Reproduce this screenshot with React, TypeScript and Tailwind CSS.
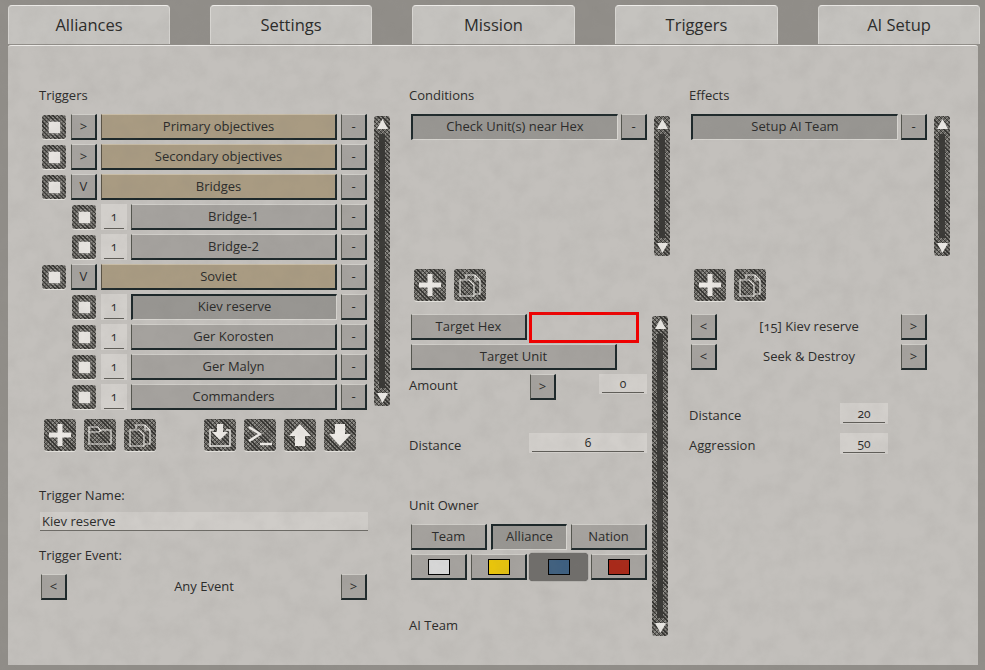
const ink = 'text-[#2b2b2a]'
const mesh =
  'bg-[#63615d] bg-[repeating-linear-gradient(45deg,#363532_0_1px,transparent_1px_3px),repeating-linear-gradient(-45deg,#8f8d88_0_1px,transparent_1px_3px)]'

type Tone = 'grey' | 'tan' | 'pressed'

function Btn({
  children,
  tone = 'grey',
  className = '',
}: {
  children?: React.ReactNode
  tone?: Tone
  className?: string
}) {
  const tones = {
    grey: 'bg-[#a5a29e] border-t-[#d0cec9] border-l-[#55564f] border-r-[#1d282a] border-b-[#1d282a] border-t border-l border-r-2 border-b-2',
    tan: 'bg-[#a99b82] border-t-[#c9bda6] border-l-[#5a5345] border-r-[#1d282a] border-b-[#1d282a] border-t border-l border-r-2 border-b-2',
    pressed:
      'bg-[#989692] pb-px border-t-[#1d282a] border-l-[#1d282a] border-r-[#d8d6d1] border-b-[#d8d6d1] border-t-2 border-l-2 border-r border-b',
  }
  return (
    <div className={`flex h-[26px] shrink-0 items-center justify-center text-[13px] ${ink} ${tones[tone]} ${className}`}>
      {children}
    </div>
  )
}

function Check() {
  return (
    <div className={`flex size-6 shrink-0 items-center justify-center rounded-[3px] ${mesh} shadow-[0_1px_0_#e4e2dd]`}>
      <div className="size-[11px] bg-[#e6e3df] shadow-[0_0_3px_#d8d6d1]" />
    </div>
  )
}

function Small({ children }: { children: React.ReactNode }) {
  return <Btn className="w-[26px] text-[12px]">{children}</Btn>
}

function Num({ children, className = 'w-[48px] h-[20px]' }: { children: React.ReactNode; className?: string }) {
  return (
    <div
      className={`flex shrink-0 items-center justify-center bg-[#d2cfcb] bg-[linear-gradient(#5f5d58,#5f5d58)] bg-[length:calc(100%-6px)_1px] bg-[position:center_bottom_1px] bg-no-repeat text-[12px] oldstyle-nums ${ink} ${className}`}
    >
      {children}
    </div>
  )
}

function Label({ children, className = '' }: { children: React.ReactNode; className?: string }) {
  return <div className={`h-[18px] text-[13px] leading-[18px] ${ink} ${className}`}>{children}</div>
}

function Arrow({ down = false }: { down?: boolean }) {
  return (
    <svg viewBox="0 0 10 10" className="h-[11px] w-[11px]">
      <path d={down ? 'M0 1h10L5 10z' : 'M0 9h10L5 0z'} fill="#e8e6e2" />
    </svg>
  )
}

function Scrollbar({ className }: { className: string }) {
  return (
    <div className={`flex w-4 shrink-0 flex-col items-center justify-between rounded-[3px] py-[3px] ${mesh} ${className}`}>
      <Arrow />
      <div className="my-1 w-[6px] flex-1 bg-[#3a3936]" />
      <Arrow down />
    </div>
  )
}

function IconBtn({ children }: { children: React.ReactNode }) {
  return (
    <div className={`flex h-[32px] w-[32px] shrink-0 items-center justify-center rounded-[3px] ${mesh} shadow-[0_1px_0_#e4e2dd]`}>
      <svg viewBox="0 0 32 32" className="size-8" fill="none" stroke="#ece9e5" strokeWidth="1.2">
        {children}
      </svg>
    </div>
  )
}

const PlusIcon = () => <path d="M13.500 5h5v8.500H27v5h-8.500V27h-5v-8.500H5v-5h8.500z" fill="#ece9e5" stroke="none" />
const FolderIcon = () => <path d="M5 25V8h9l2 3h11v14z M5 13h10l2-2" />
const CopyIcon = () => (
  <>
    <path d="M12 10V6h9l5 5v14h-5" />
    <path d="M21 6v5h5" />
    <path d="M6 11h9l5 5v11H6z" />
  </>
)
const ImportIcon = () => (
  <>
    <path d="M10 11H6v16h20V11h-4" strokeWidth="1.500" />
    <path d="M13 5h6v8h5l-8 8-8-8h5z" fill="#ece9e5" stroke="none" />
  </>
)
const TerminalIcon = () => (
  <>
    <path d="M5 8l11 7-11 7" strokeWidth="2.500" />
    <path d="M16 25h12" strokeWidth="2.500" />
  </>
)
const UpIcon = () => <path d="M16 5l11 12h-6v10H11V17H5z" fill="#ece9e5" stroke="none" />
const DownIcon = () => <path d="M16 27L5 15h6V5h10v10h6z" fill="#ece9e5" stroke="none" />

function Tab({ label, className = '' }: { label: string; className?: string }) {
  return (
    <div className={`flex h-[39px] w-[162px] items-center justify-center rounded-t-[4px] border-l border-r border-t border-l-[#d8d6d2] border-r-[#d8d6d2] border-t-[#efedea] bg-[#c5c3bf] text-[16.500px] ${ink} ${className}`}>
      {label}
    </div>
  )
}

const rows: { label: string; tag: string; tone?: Tone; child?: boolean }[] = [
  { label: 'Primary objectives', tag: '>', tone: 'tan' },
  { label: 'Secondary objectives', tag: '>', tone: 'tan' },
  { label: 'Bridges', tag: 'V', tone: 'tan' },
  { label: 'Bridge-1', tag: '1', child: true },
  { label: 'Bridge-2', tag: '1', child: true },
  { label: 'Soviet', tag: 'V', tone: 'tan' },
  { label: 'Kiev reserve', tag: '1', child: true, tone: 'pressed' },
  { label: 'Ger Korosten', tag: '1', child: true },
  { label: 'Ger Malyn', tag: '1', child: true },
  { label: 'Commanders', tag: '1', child: true },
]

function TriggerRow({ label, tag, tone = 'grey', child }: (typeof rows)[number]) {
  return (
    <div className="flex h-[26px] items-center">
      {child ? (
        <>
          <div className="ml-[32px]">
            <Check />
          </div>
          <div className="ml-[5px]">
            <Num className="h-[26px] w-[26px]">{tag}</Num>
          </div>
          <Btn tone={tone} className="ml-1 w-[206px]">
            {label}
          </Btn>
        </>
      ) : (
        <>
          <div className="ml-[2px]">
            <Check />
          </div>
          <Btn className="ml-[5px] w-[26px]">{tag}</Btn>
          <Btn tone={tone} className="ml-1 w-[236px]">
            {label}
          </Btn>
        </>
      )}
      <Btn className="ml-1 w-[26px] text-[12px]">-</Btn>
    </div>
  )
}

function Swatch({ color, selected }: { color: string; selected?: boolean }) {
  return (
    <div
      className={
        selected
          ? '-mt-px ml-[2px] mr-[3px] flex h-[28px] w-[59px] shrink-0 items-center justify-center rounded-[4px] bg-[#706e6b] shadow-[0_0_1px_#333]'
          : 'flex h-[26px] w-[56px] shrink-0 items-center justify-center border-b-2 border-l border-r-2 border-t border-b-[#1d282a] border-l-[#55564f] border-r-[#1d282a] border-t-[#d0cec9] bg-[#a5a29e]'
      }
    >
      <div className={`h-4 w-[22px] border border-black ${color}`} />
    </div>
  )
}

function ListHead({ title, label }: { title: string; label: string }) {
  return (
    <>
      <Label className="-ml-px">{title}</Label>
      <div className="mt-[10px] flex h-[142px]">
        <div className="ml-px flex">
          <Btn tone="pressed" className="w-[207px]">
            {label}
          </Btn>
          <Btn className="ml-[3px] w-[26px] text-[12px]">-</Btn>
        </div>
        <Scrollbar className="ml-[7px] mt-[2px] h-[140px]" />
      </div>
      <div className="ml-1 mt-[13px] flex gap-2">
        <IconBtn>
          <PlusIcon />
        </IconBtn>
        <IconBtn>
          <CopyIcon />
        </IconBtn>
      </div>
    </>
  )
}

export default function App() {
  return (
    <div className="relative h-[670px] w-[985px] overflow-hidden bg-[#918e89] pl-2 pt-[5px] [font-family:'Open_Sans','Noto_Sans',sans-serif]">
      <div className="flex gap-10">
        <Tab label="Alliances" />
        <Tab label="Settings" />
        <Tab label="Mission" className="w-[163px]" />
        <Tab label="Triggers" className="w-[163px]" />
        <Tab label="AI Setup" />
      </div>

      <div className="mt-px flex h-[620px] w-[970px] gap-5 rounded-t-[3px] border-t border-[#efedea] bg-[#c3c0bc] pl-8 pt-[40px]">
        <div className="w-[350px] shrink-0">
          <Label className="-ml-px">Triggers</Label>
          <div className="mt-[10px] flex">
            <div className="flex w-[327px] flex-col gap-1">
              {rows.map((r) => (
                <TriggerRow key={r.label} {...r} />
              ))}
            </div>
            <Scrollbar className="ml-[7px] mt-[2px] h-[290px]" />
          </div>
          <div className="ml-1 mt-[9px] flex gap-2">
            <IconBtn>
              <PlusIcon />
            </IconBtn>
            <IconBtn>
              <FolderIcon />
            </IconBtn>
            <IconBtn>
              <CopyIcon />
            </IconBtn>
            <div className="w-8" />
            <IconBtn>
              <ImportIcon />
            </IconBtn>
            <IconBtn>
              <TerminalIcon />
            </IconBtn>
            <IconBtn>
              <UpIcon />
            </IconBtn>
            <IconBtn>
              <DownIcon />
            </IconBtn>
          </div>
          <Label className="-ml-px mt-[35px]">Trigger Name:</Label>
          <div className={`mt-[8px] h-[19px] w-[328px] border-b border-b-[#6d6b66] bg-[#cfccc8] pl-[2px] text-[13px] leading-[18px] ${ink}`}>
            Kiev reserve
          </div>
          <Label className="-ml-px mt-[15px]">Trigger Event:</Label>
          <div className="ml-px mt-[10px] flex w-[326px] items-center justify-between">
            <Small>&lt;</Small>
            <span className={`text-[13px] ${ink}`}>Any Event</span>
            <Small>&gt;</Small>
          </div>
        </div>

        <div className="w-[260px] shrink-0">
          <ListHead title="Conditions" label="Check Unit(s) near Hex" />
          <div className="mt-[13px] flex">
            <div className="w-[237px] shrink-0 pl-px">
              <div className="flex h-[26px] items-center">
                <Btn className="w-[116px]">Target Hex</Btn>
                <div className="ml-[2px] h-[31px] w-[110px] shrink-0 border-[3px] border-[#f00000]" />
              </div>
              <Btn className="mt-1 w-[206px]">Target Unit</Btn>
              <div className="mt-1 flex h-[26px] items-center">
                <Label className="-ml-[2px] -mt-[4px] w-[122px]">Amount</Label>
                <Small>&gt;</Small>
                <Num className="-mt-[7px] ml-[43px] h-[20px] w-[48px]">0</Num>
              </div>
              <div className="mt-[33px] flex h-[20px] items-center">
                <Label className="-ml-[2px] mt-[4px] w-[121px]">Distance</Label>
                <Num className="h-[20px] w-[118px]">6</Num>
              </div>
              <Label className="-ml-[2px] mt-[43px]">Unit Owner</Label>
              <div className="mt-[10px] flex gap-1">
                <Btn className="w-[76px]">Team</Btn>
                <Btn tone="pressed" className="w-[76px]">
                  Alliance
                </Btn>
                <Btn className="w-[76px]">Nation</Btn>
              </div>
              <div className="mt-1 flex h-[28px] items-start">
                <Swatch color="bg-[#d9d9d9]" />
                <div className="ml-1">
                  <Swatch color="bg-[#e8c40c]" />
                </div>
                <Swatch color="bg-[#3d5f80]" selected />
                <Swatch color="bg-[#a82a1a]" />
              </div>
              <Label className="-ml-[2px] mt-[34px]">AI Team</Label>
            </div>
            <Scrollbar className="ml-[5px] mt-[2px] h-[320px]" />
          </div>
        </div>

        <div className="w-[260px] shrink-0">
          <ListHead title="Effects" label="Setup AI Team" />
          <div className="ml-px mt-[13px] flex w-[236px] items-center justify-between">
            <Small>&lt;</Small>
            <span className={`text-[13px] oldstyle-nums ${ink}`}>[15] Kiev reserve</span>
            <Small>&gt;</Small>
          </div>
          <div className="ml-px mt-1 flex w-[236px] items-center justify-between">
            <Small>&lt;</Small>
            <span className={`text-[13px] ${ink}`}>Seek &amp; Destroy</span>
            <Small>&gt;</Small>
          </div>
          <div className="mt-[33px] flex w-[198px] items-center justify-between">
            <Label className="-ml-px mt-[2px]">Distance</Label>
            <Num className="h-[21px] w-[48px]">20</Num>
          </div>
          <div className="mt-[9px] flex w-[198px] items-center justify-between">
            <Label className="-ml-px mt-[2px]">Aggression</Label>
            <Num className="h-[21px] w-[48px]">50</Num>
          </div>
        </div>
      </div>

      {/* stone grain over the whole screen */}
      <svg className="pointer-events-none absolute inset-0 size-full" aria-hidden="true">
        <filter id="grain">
          <feTurbulence type="fractalNoise" baseFrequency="0.05" numOctaves="5" seed="7" />
          <feColorMatrix values="0 0 0 0 0.2  0 0 0 0 0.19  0 0 0 0 0.18  0 0 0 0.9 -0.32" />
        </filter>
        <rect width="100%" height="100%" filter="url(#grain)" opacity="0.18" />
      </svg>
    </div>
  )
}
